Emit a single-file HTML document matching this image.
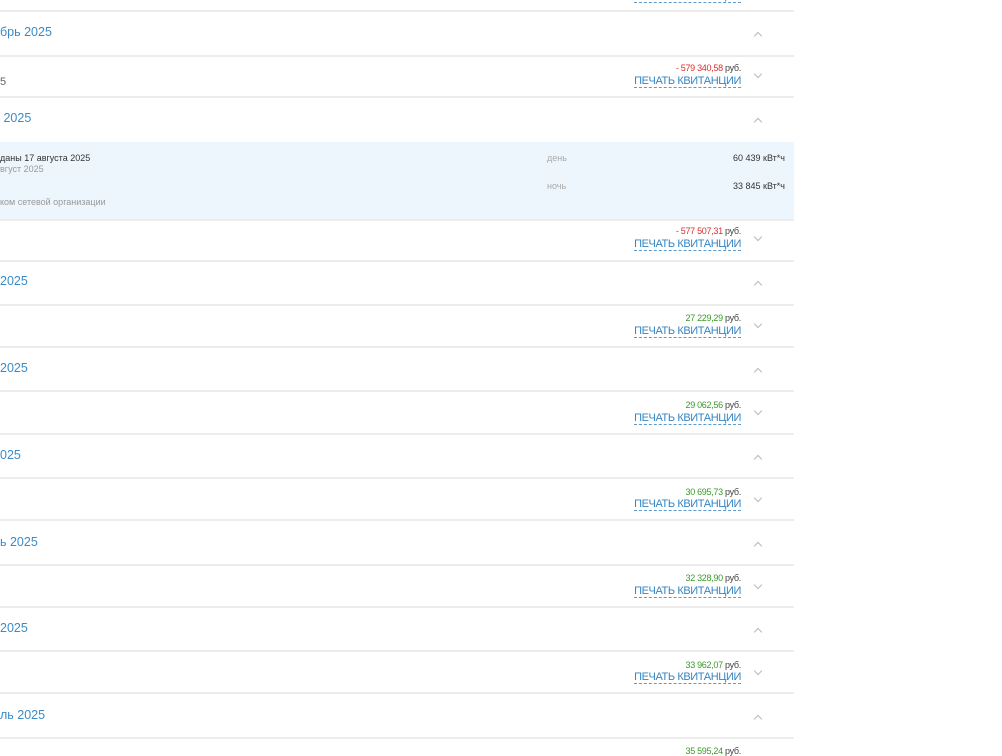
<!DOCTYPE html>
<html><head><meta charset="utf-8"><style>
body{margin:0;width:1002px;height:752px;overflow:hidden;background:#fff;font-family:"Liberation Sans","Noto Sans CJK SC",sans-serif;position:relative}
.l{position:absolute;left:0;width:794px;height:2px;background:#ececec}
.t{position:absolute;left:0;font-size:12.5px;color:#3b8bc6;white-space:nowrap}
.a{position:absolute;right:261px;font-size:9px;color:#444;white-space:nowrap;letter-spacing:-0.3px}
.a .r{color:#d9302c}.a .g{color:#3a9a2a}
.k{position:absolute;right:261px;font-size:11px;letter-spacing:-0.4px;color:#3585c2;border-bottom:1px dashed #5b9bd0;line-height:12px;white-space:nowrap}
.c{position:absolute;left:755px;width:5px;height:5px;border-left:1.2px solid #b8b8b8;border-top:1.2px solid #b8b8b8}
.up{transform:rotate(45deg)}.dn{transform:rotate(225deg)}
.det{position:absolute;left:0;top:142px;width:794px;height:77px;background:#eef6fd}
.s{position:absolute;font-size:9px;white-space:nowrap}
</style></head><body>
<div class="k" style="top:-10px">ПЕЧАТЬ КВИТАНЦИИ</div>
<div class="l" style="top:10px"></div>
<div class="t" style="top:25px">брь 2025</div><div class="c up" style="top:33px"></div>
<div class="l" style="top:55px"></div>
<div class="s" style="left:0;top:76px;color:#666;font-size:11px">5</div>
<div class="a" style="top:63px"><span class="r">- 579 340,58</span> руб.</div>
<div class="k" style="top:75px">ПЕЧАТЬ КВИТАНЦИИ</div><div class="c dn" style="top:71px"></div>
<div class="l" style="top:96px"></div>
<div class="t" style="top:111px">&nbsp;2025</div><div class="c up" style="top:119px"></div>
<div class="det"></div>
<div class="s" style="left:0;top:153px;color:#333">даны 17 августа 2025</div>
<div class="s" style="left:0;top:164px;color:#999">вгуст 2025</div>
<div class="s" style="left:0;top:197px;color:#999">ком сетевой организации</div>
<div class="s" style="left:547px;top:153px;color:#aaa">день</div>
<div class="s" style="left:547px;top:181px;color:#aaa">ночь</div>
<div class="s" style="right:217px;top:153px;color:#333">60 439 кВт*ч</div>
<div class="s" style="right:217px;top:181px;color:#333">33 845 кВт*ч</div>
<div class="l" style="top:219px"></div>
<div class="a" style="top:226px"><span class="r">- 577 507,31</span> руб.</div>
<div class="k" style="top:238px">ПЕЧАТЬ КВИТАНЦИИ</div><div class="c dn" style="top:234px"></div>
<div class="l" style="top:260px"></div>
<div class="t" style="top:274px">2025</div><div class="c up" style="top:282px"></div>
<div class="l" style="top:304px"></div>
<div class="a" style="top:313px"><span class="g">27 229,29</span> руб.</div>
<div class="k" style="top:325px">ПЕЧАТЬ КВИТАНЦИИ</div><div class="c dn" style="top:321px"></div>
<div class="l" style="top:346px"></div>
<div class="t" style="top:361px">2025</div><div class="c up" style="top:369px"></div>
<div class="l" style="top:390px"></div>
<div class="a" style="top:400px"><span class="g">29 062,56</span> руб.</div>
<div class="k" style="top:412px">ПЕЧАТЬ КВИТАНЦИИ</div><div class="c dn" style="top:408px"></div>
<div class="l" style="top:433px"></div>
<div class="t" style="top:448px">025</div><div class="c up" style="top:456px"></div>
<div class="l" style="top:477px"></div>
<div class="a" style="top:487px"><span class="g">30 695,73</span> руб.</div>
<div class="k" style="top:498px">ПЕЧАТЬ КВИТАНЦИИ</div><div class="c dn" style="top:495px"></div>
<div class="l" style="top:519px"></div>
<div class="t" style="top:535px">ь 2025</div><div class="c up" style="top:543px"></div>
<div class="l" style="top:564px"></div>
<div class="a" style="top:573px"><span class="g">32 328,90</span> руб.</div>
<div class="k" style="top:585px">ПЕЧАТЬ КВИТАНЦИИ</div><div class="c dn" style="top:582px"></div>
<div class="l" style="top:606px"></div>
<div class="t" style="top:621px">2025</div><div class="c up" style="top:629px"></div>
<div class="l" style="top:650px"></div>
<div class="a" style="top:660px"><span class="g">33 962,07</span> руб.</div>
<div class="k" style="top:671px">ПЕЧАТЬ КВИТАНЦИИ</div><div class="c dn" style="top:668px"></div>
<div class="l" style="top:692px"></div>
<div class="t" style="top:708px">ль 2025</div><div class="c up" style="top:716px"></div>
<div class="l" style="top:737px"></div>
<div class="a" style="top:746px"><span class="g">35 595,24</span> руб.</div>
</body></html>
